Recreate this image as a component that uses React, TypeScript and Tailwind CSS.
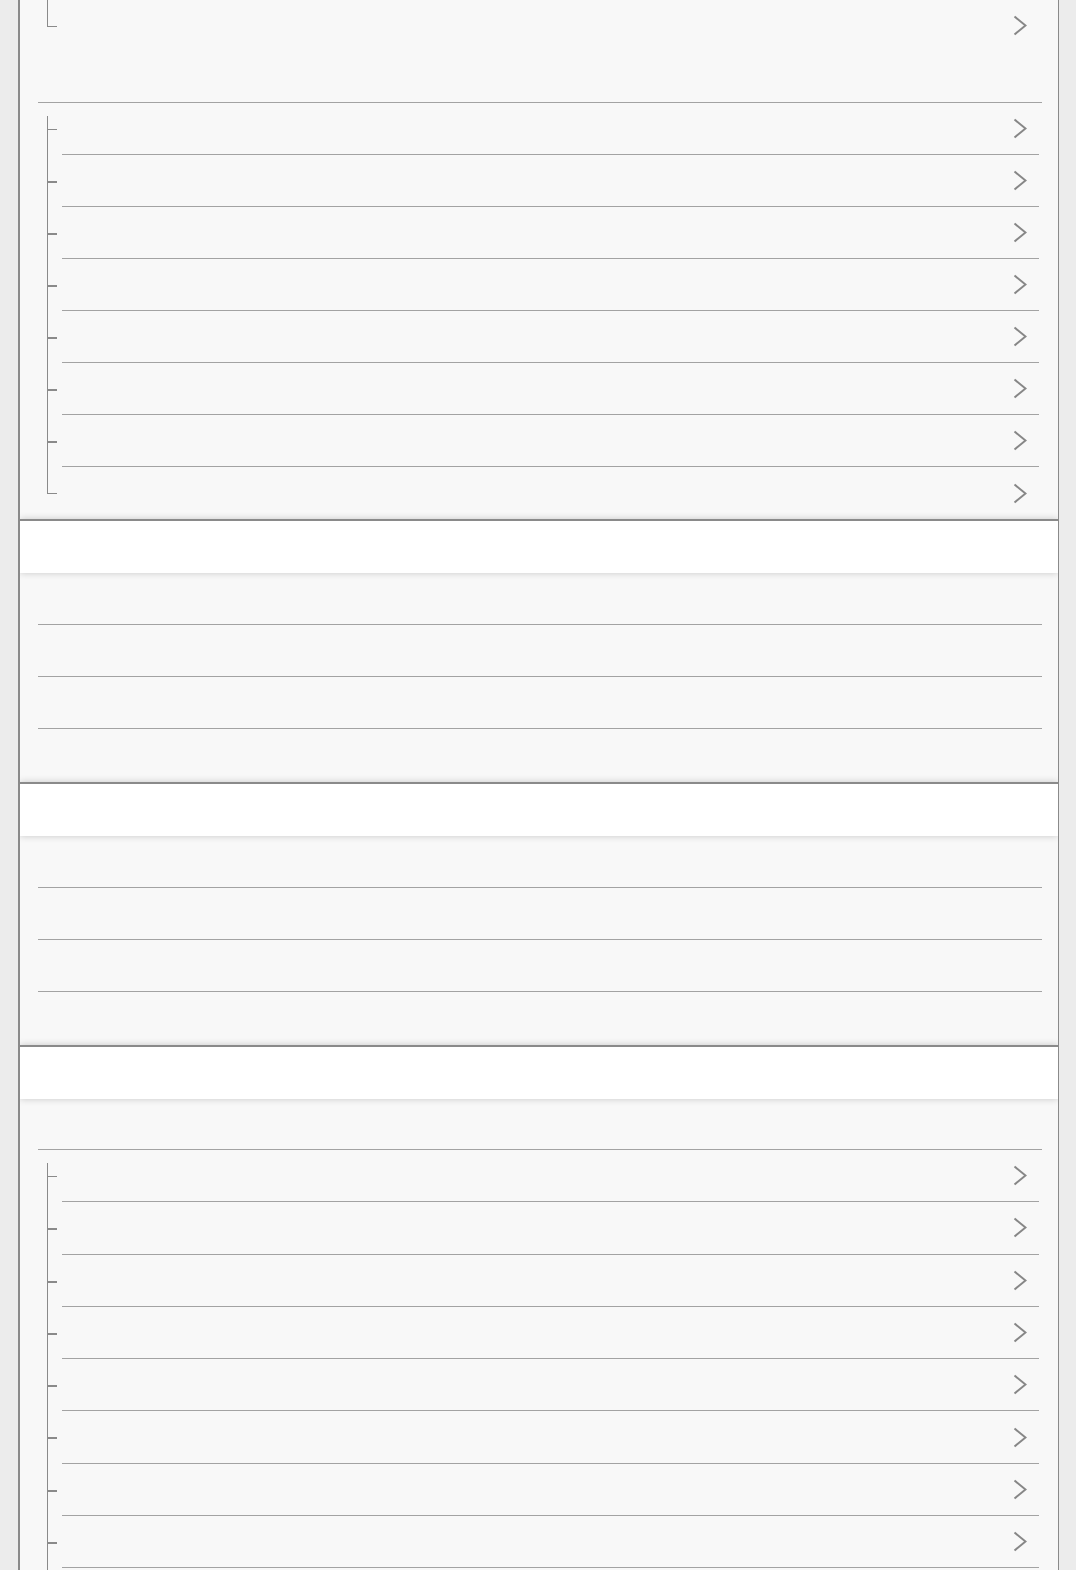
type TreePos = "first" | "middle" | "last";

const Chevron = () => (
  <svg width="14" height="21" viewBox="0 0 14 21" fill="none" className="shrink-0">
    <path d="M1.5 1.5 L12.5 10.5 L1.5 19.5" stroke="#878787" strokeWidth="2" />
  </svg>
);

const TreeRow = ({
  pos,
  height = 52,
  divider = true,
}: {
  pos: TreePos;
  height?: number;
  divider?: boolean;
}) => {
  const lineClass =
    pos === "first"
      ? "top-[13px] bottom-0"
      : pos === "last"
        ? "top-0 h-[27px]"
        : "top-0 bottom-0";
  const tickClass = pos === "middle" ? "h-[2px]" : "h-px";

  return (
    <div className="flex" style={{ height }}>
      <div className="relative w-[42px] shrink-0">
        <div className={`absolute left-[27px] w-px bg-[#8a8a8a] ${lineClass}`} />
        <div className={`absolute left-[27px] top-[26px] w-[10px] bg-[#8a8a8a] ${tickClass}`} />
      </div>
      <div
        className={`mr-[19px] flex flex-1 items-center justify-end pr-[12px] ${
          divider ? "border-b border-[#a3a3a3]" : ""
        }`}
      >
        <Chevron />
      </div>
    </div>
  );
};

const GroupRow = ({ divider = true, height = 52 }: { divider?: boolean; height?: number }) => (
  <div
    className={`ml-[18px] mr-[16px] ${divider ? "border-b border-[#a3a3a3]" : ""}`}
    style={{ height }}
  />
);

const SectionHeader = () => (
  <div className="relative z-10 h-[54px] border-t-2 border-[#8a8a8a] bg-white shadow-[0_0_7px_rgba(0,0,0,0.2)]" />
);

const TreeGroup = ({
  count,
  open = false,
  rowHeight = 52,
}: {
  count: number;
  open?: boolean;
  rowHeight?: number;
}) => (
  <div>
    {Array.from({ length: count }).map((_, i) => {
      const isLast = i === count - 1 && !open;
      const pos: TreePos = i === 0 ? "first" : isLast ? "last" : "middle";
      return <TreeRow key={i} pos={pos} divider={!isLast} height={rowHeight} />;
    })}
  </div>
);

export default function App() {
  return (
    <div className="min-h-screen bg-[#ececec] font-['Liberation_Sans',sans-serif]">
      <div className="ml-[18px] w-[1041px] overflow-hidden border-l-2 border-r border-[#8a8a8a] bg-[#f8f8f8]">
        {/* tail of a tree group scrolled off above */}
        <TreeRow pos="last" height={51} divider={false} />
        <GroupRow />
        <TreeGroup count={8} />

        <SectionHeader />
        <GroupRow />
        <GroupRow />
        <GroupRow />
        <GroupRow divider={false} height={53} />

        <SectionHeader />
        <GroupRow />
        <GroupRow />
        <GroupRow />
        <GroupRow divider={false} height={53} />

        <SectionHeader />
        <GroupRow height={51} />
        <TreeGroup count={10} open rowHeight={52.3} />
      </div>
    </div>
  );
}
